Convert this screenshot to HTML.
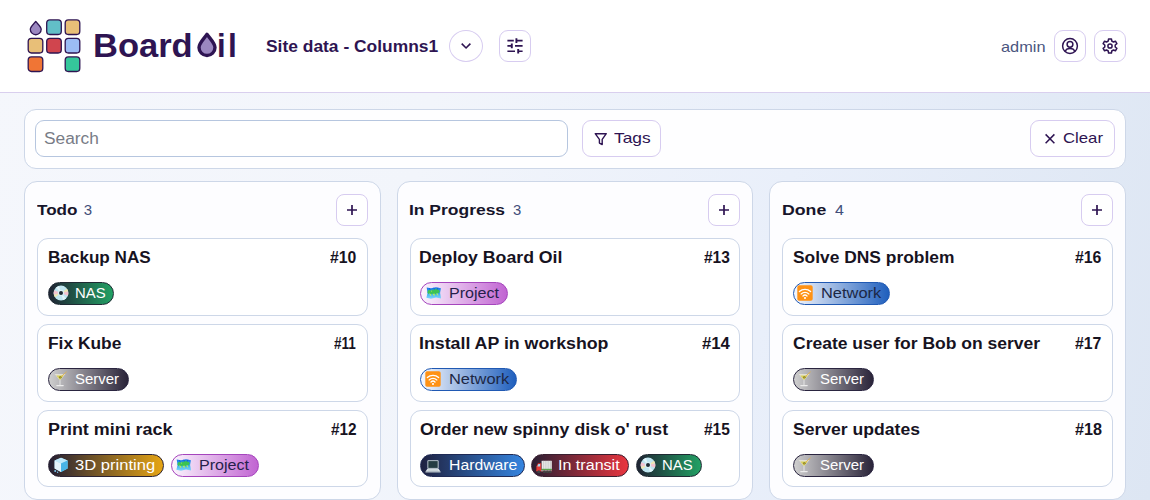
<!DOCTYPE html>
<html lang="en">
<head>
<meta charset="utf-8">
<title>Board Oil</title>
<style>
*{box-sizing:border-box;margin:0;padding:0}
html,body{width:1150px;height:500px;overflow:hidden}
body{font-family:"Liberation Sans",sans-serif;color:#1b1730;background:linear-gradient(102deg,#f5f7fc 0%,#f2f5fb 36%,#e9effa 66%,#dde6f3 100%);position:relative}
.sx{position:absolute;top:0;display:block;white-space:nowrap;transform-origin:0 50%}
.hdr{position:absolute;left:0;top:0;width:1150px;height:93px;background:#fff;border-bottom:1px solid #d9cfee}
.logo{position:absolute;left:26.200px;top:17.200px}
.brand{position:absolute;left:0;top:26px;width:300px;height:40px;font-size:32.400px;font-weight:700;color:#2e1452;line-height:40px;white-space:nowrap}
.brand .drop{position:absolute;left:194.700px;top:4.600px}
.site{position:absolute;left:0;top:36px;width:450px;height:22px;font-size:16px;font-weight:700;color:#2e1452;line-height:22px;white-space:nowrap}
.ib{position:absolute;top:30px;width:32px;height:32px;border:1px solid #d7ccf0;background:#fff;border-radius:9px}
.ib svg{position:absolute;left:0;top:0}
.ib.round{border-radius:50%}
.admin{position:absolute;left:0;top:36px;width:1050px;height:22px;font-size:15px;color:#4b5680;line-height:22px;white-space:nowrap}
.panel{position:absolute;left:24px;top:109px;width:1102px;height:60px;background:#fefeff;border:1px solid #cdd7e8;border-radius:12px}
.search{position:absolute;left:10px;top:10px;width:533px;height:37px;border:1px solid #b6c6df;border-radius:9px;background:#fff;font-size:16px;color:#787c86;line-height:35.500px}
.btn{position:absolute;top:10px;height:37px;border:1px solid #d7ccf0;border-radius:9px;background:#fff;font-size:15px;color:#2e1452;line-height:34.400px;white-space:nowrap}
.col{position:absolute;top:181px;width:356.670px;height:319px;background:#fdfdff;border:1px solid #cdd7e8;border-radius:13px}
.col h2{position:absolute;left:0;top:18px;width:300px;height:20px;font-size:15px;font-weight:700;line-height:19.800px;color:#17152b;white-space:nowrap}
.col h2 em{position:absolute;left:0;top:0;line-height:19.400px;font-style:normal;font-weight:400;color:#414e7a;font-size:15px}
.add{position:absolute;right:12px;top:12px;width:32px;height:32px;border:1px solid #d7ccf0;border-radius:8px;background:#fff}
.add svg{position:absolute;left:0;top:0}
.card{position:absolute;left:12px;right:12px;height:78px;background:#fff;border:1px solid #cdd7e8;border-radius:11px}
.card b{position:absolute;left:0;top:9px;width:300px;height:20px;font-size:16px;line-height:20px;font-weight:700;color:#17131f;white-space:nowrap}
.card i{position:absolute;left:0;top:9px;width:330px;height:20px;font-size:16px;line-height:20px;font-weight:700;font-style:normal;color:#17131f;white-space:nowrap}
.tags{position:absolute;left:10px;top:43px;height:23px;width:320px}
.tag{position:absolute;top:0;height:23px;border-radius:12px;border:1px solid #222;font-size:14px;line-height:21px;white-space:nowrap;color:#fff}
.tag svg{position:absolute;left:3.600px;top:1.700px;width:16px;height:16px}
.nas{background:linear-gradient(90deg,#1f2333 0%,#22a164 100%);border-color:#1f2a33}
.srv{background:linear-gradient(90deg,#cfcfcf 0%,#2a2439 100%);border-color:#2a2540}
.p3d{background:linear-gradient(90deg,#231e33 0%,#e6a514 100%);border-color:#2a2233}
.prj{background:linear-gradient(90deg,#fbf5fd 0%,#c164d2 100%);border-color:#a545bd;color:#251f4b}
.net{background:linear-gradient(90deg,#f6f8fd 0%,#1f5fbd 100%);border-color:#2059b3;color:#1c2745}
.hw{background:linear-gradient(90deg,#1f2140 0%,#3585e0 100%);border-color:#1f2a55}
.trn{background:linear-gradient(90deg,#2a1f33 0%,#e9353f 100%);border-color:#3a1f30}
</style>
</head>
<body>
<div class="hdr">
<svg class="logo" width="60" height="60" viewBox="0 0 60 60">
<g stroke="#2e1452" stroke-width="1.3">
<path d="M9.75 4.4 C11.8 7.2 15.2 9.900 15.2 12.300 A5.450 5.450 0 0 1 4.300 12.300 C4.300 9.900 7.700 7.200 9.750 4.400 Z" fill="#9b87c0" stroke-linejoin="round"/>
<rect x="20.7" y="2.9" width="14.6" height="14.6" rx="3.2" fill="#62bfc8"/>
<rect x="39.2" y="2.9" width="14.6" height="14.6" rx="3.2" fill="#e8bf78"/>
<rect x="2.2" y="21.4" width="14.6" height="14.6" rx="3.2" fill="#e8bf78"/>
<rect x="20.7" y="21.4" width="14.6" height="14.6" rx="3.2" fill="#d0454e"/>
<rect x="39.2" y="21.4" width="14.6" height="14.6" rx="3.2" fill="#9bbcf5"/>
<rect x="2.2" y="39.9" width="14.6" height="14.6" rx="3.2" fill="#f07535"/>
<rect x="39.2" y="39.9" width="14.6" height="14.6" rx="3.2" fill="#35c79b"/>
</g></svg>
<div class="brand"><span class="sx" style="left:92.57px;transform:scaleX(1.065)">Board</span><svg class="drop" width="24" height="28" viewBox="0 0 24 28"><path d="M12 3.3 C15.4 8 20 12.200 20 16.500 A8 8 0 0 1 4 16.500 C4 12.200 8.600 8 12 3.3 Z" fill="#9b87c0" stroke="#2e1452" stroke-width="3.4" stroke-linejoin="round"/></svg><span class="sx" style="left:217.28px;transform:scaleX(0.960)">i</span><span class="sx" style="left:227.64px;transform:scaleX(0.980)">l</span></div>
<div class="site"><span class="sx" style="left:266.30px;transform:scaleX(1.088)">Site data - Columns1</span></div>
<div class="ib round" style="left:449px;width:34px"><svg width="30" height="30" viewBox="0 0 30 30"><path d="M11.700 12.600 L16.050 16.950 L20.400 12.600" fill="none" stroke="#2e1452" stroke-width="1.6"/></svg></div>
<div class="ib" style="left:499px"><svg width="30" height="30" viewBox="0 0 30 30"><g stroke="#2e1452" stroke-width="1.6" fill="none"><path d="M7.400 9.650H13.800M16.400 9.650H22.600M7.400 14.850H11.800M15 14.850H22.600M7.400 20.200H15M18.200 20.200H22.600"/><path d="M16.400 7.200V12M11.800 12.600V17.200M18.200 17.900V22.500" stroke-width="1.9"/></g></svg></div>
<div class="admin"><span class="sx" style="left:1001.30px;transform:scaleX(1.089)">admin</span></div>
<div class="ib" style="left:1054px"><svg width="30" height="30" viewBox="0 0 30 30"><g stroke="#2e1452" stroke-width="1.5" fill="none"><circle cx="15" cy="15" r="7.400"/><circle cx="15" cy="13.300" r="2.900"/><path d="M10.400 20.300 C11.300 16.600 18.700 16.600 19.600 20.300"/></g></svg></div>
<div class="ib" style="left:1094px"><svg width="30" height="30" viewBox="0 0 30 30"><path d="M13.27 9.99 L13.55 7.90 L16.45 7.90 L16.73 9.99 L18.48 11.00 L20.43 10.20 L21.88 12.70 L20.20 13.99 L20.20 16.01 L21.88 17.30 L20.43 19.80 L18.48 19.00 L16.73 20.01 L16.45 22.10 L13.55 22.10 L13.27 20.01 L11.52 19.00 L9.57 19.80 L8.12 17.30 L9.80 16.01 L9.80 13.99 L8.12 12.70 L9.57 10.20 L11.52 11.00 Z" fill="none" stroke="#2e1452" stroke-width="1.5" stroke-linejoin="round"/><circle cx="15" cy="15" r="2.100" fill="none" stroke="#2e1452" stroke-width="1.5"/></svg></div>
</div>
<div class="panel">
<div class="search"><span class="sx" style="left:8.20px;transform:scaleX(1.082)">Search</span></div>
<div class="btn" style="left:557px;width:79px"><svg style="position:absolute;left:9.900px;top:10.200px" width="16" height="16" viewBox="0 0 16 16"><path d="M2.200 2.700H13.300L9.200 8.300V13.500L6.400 12.100V8.300Z" fill="none" stroke="#2e1452" stroke-width="1.4" stroke-linejoin="round"/></svg><span class="sx" style="left:30.60px;transform:scaleX(1.158)">Tags</span></div>
<div class="btn" style="left:1005px;width:85px"><svg style="position:absolute;left:11.200px;top:10.200px" width="16" height="16" viewBox="0 0 16 16"><path d="M3.600 3.400L12.400 12.200M12.400 3.400L3.600 12.200" fill="none" stroke="#2e1452" stroke-width="1.5"/></svg><span class="sx" style="left:31.80px;transform:scaleX(1.116)">Clear</span></div>
</div>
<div class="col" style="left:24px"><h2><span class="sx" style="left:12.30px;transform:scaleX(1.139)">Todo</span><em><span class="sx" style="left:58.70px;transform:scaleX(1.000)">3</span></em></h2><div class="add"><svg width="30" height="30" viewBox="0 0 30 30"><path d="M15 10V20M10 15H20" stroke="#2e1452" stroke-width="1.7" fill="none"/></svg></div><div class="card" style="top:56px;height:78px"><b><span class="sx" style="left:9.83px;transform:scaleX(1.069)">Backup NAS</span></b><i><span class="sx" style="left:291.80px;transform:scaleX(0.985)">#10</span></i><div class="tags" style="left:10.00px"><div class="tag nas" style="left:0.00px;width:66px"><svg viewBox="0 0 16 16"><circle cx="8" cy="8" r="7.4" fill="#bfe6f0"/><path d="M8 8 L1.2 5.2 A7.4 7.4 0 0 0 0.9 9.8 Z" fill="#f3c3cf"/><path d="M8 8 L14.8 10.8 A7.4 7.4 0 0 0 15.1 6.2 Z" fill="#f3c3cf"/><path d="M8 8 L0.9 9.8 A7.4 7.4 0 0 0 2 12.3 Z" fill="#f0e6b0"/><path d="M8 8 L15.1 6.2 A7.4 7.4 0 0 0 14 3.7 Z" fill="#f0e6b0"/><path d="M8 8 L3 2.6 A7.4 7.4 0 0 1 6 0.9 Z" fill="#e2f5fa"/><path d="M8 8 L13 13.4 A7.4 7.4 0 0 1 10 15.1 Z" fill="#e2f5fa"/><circle cx="8" cy="8" r="3.1" fill="#d9eef4"/><circle cx="8" cy="8" r="2" fill="#1f2a33"/></svg><span class="sx" style="left:25.54px;transform:scaleX(1.064)">NAS</span></div></div></div><div class="card" style="top:142px;height:78px"><b><span class="sx" style="left:9.81px;transform:scaleX(1.086)">Fix Kube</span></b><i><span class="sx" style="left:296.30px;transform:scaleX(0.845)">#11</span></i><div class="tags" style="left:10.00px"><div class="tag srv" style="left:0.00px;width:80.7px"><svg viewBox="0 0 16 16"><path d="M1.5 3 H12.5 L7 9.5 Z" fill="#e9e6d8" fill-opacity=".85"/><path d="M3.2 4.6 H10.8 L7 9 Z" fill="#d9cf5a"/><circle cx="7.4" cy="6.3" r="1.3" fill="#7d9a2c"/><circle cx="7.1" cy="6.5" r=".5" fill="#d8402c"/><path d="M7.4 6.3 L13.6 .8" stroke="#e0b24a" stroke-width=".9"/><path d="M7 9.2 V14.2" stroke="#e4e4e4" stroke-width="1"/><path d="M3.8 14.6 H10.2" stroke="#ececec" stroke-width="1.2" stroke-linecap="round"/></svg><span class="sx" style="left:26.20px;transform:scaleX(1.068)">Server</span></div></div></div><div class="card" style="top:228px;height:77px"><b><span class="sx" style="left:9.78px;transform:scaleX(1.120)">Print mini rack</span></b><i><span class="sx" style="left:293.30px;transform:scaleX(0.959)">#12</span></i><div class="tags" style="left:10.00px"><div class="tag p3d" style="left:0.00px;width:116.4px"><svg viewBox="0 0 16 16"><path d="M8 .8 L14.6 3.6 V11.4 L8 15 L1.6 11.4 V3.6 Z" fill="#8fd3f2"/><path d="M8 .8 L14.6 3.6 L8 6.6 L1.6 3.6 Z" fill="#bfe8fa"/><path d="M1.6 3.6 L8 6.6 V15 L1.6 11.4 Z" fill="#e4f3fb"/><path d="M8 6.6 L14.6 3.6 V11.4 L8 15 Z" fill="#49b4e6"/><circle cx="2.2" cy="14" r="1" fill="#7cc8ee"/><circle cx="4.6" cy="15.3" r=".7" fill="#7cc8ee"/></svg><span class="sx" style="left:26.00px;transform:scaleX(1.184)">3D printing</span></div><div class="tag prj" style="left:122.80px;width:88px"><svg viewBox="0 0 16 16"><defs><linearGradient id="mg" x1="0" y1="0" x2="0" y2="1"><stop offset="0" stop-color="#1877e6"/><stop offset=".45" stop-color="#2f9ff0"/><stop offset=".75" stop-color="#59c3f5"/><stop offset="1" stop-color="#86d6f8"/></linearGradient></defs><path d="M1.700 2.400 L6 3.300 L11 2.200 L15.900 3.200 L15.100 8 L16.100 13.500 L11 12.600 L6 13.800 L1.400 12.800 L2.500 8 Z" fill="url(#mg)"/><path d="M2.400 7.600 L3 5.400 L4.600 4.800 L5.400 6 L6.600 4.400 L8 5.600 L9 4 L10.600 4.600 L11.200 3.600 L12.600 4.800 L14 5 L14.800 6.800 L13.400 8.600 L12.200 7.800 L11.200 9.800 L9.800 8.600 L8.600 10.200 L7.200 8.400 L5.800 9.600 L4.800 8.200 L3.400 9 Z" fill="#3cc352"/><path d="M4.200 8.600 l1.600 .400 .800 2 -1.600-.600Z M7.600 9 l1.800-.400 .600 2.200 -1.400-.400Z M11.200 8.200 l1.600 .600 .600 2.200 -1.600-1.200Z M5.600 6 l1.200-.400 .400 1.200Z" fill="#b9f060"/><path d="M4.400 3.200 l.8 1.800 M8.800 2.800 l.6 1.600 M12.800 2.800 l-.500 1.800" stroke="#0f5fd0" stroke-width=".9" fill="none"/></svg><span class="sx" style="left:27.45px;transform:scaleX(1.148)">Project</span></div></div></div></div>
<div class="col" style="left:396.67px"><h2><span class="sx" style="left:11.67px;transform:scaleX(1.164)">In Progress</span><em><span class="sx" style="left:115.63px;transform:scaleX(0.988)">3</span></em></h2><div class="add"><svg width="30" height="30" viewBox="0 0 30 30"><path d="M15 10V20M10 15H20" stroke="#2e1452" stroke-width="1.7" fill="none"/></svg></div><div class="card" style="top:56px;height:78px"><b><span class="sx" style="left:8.63px;transform:scaleX(1.105)">Deploy Board Oil</span></b><i><span class="sx" style="left:293.63px;transform:scaleX(0.967)">#13</span></i><div class="tags" style="left:9.43px"><div class="tag prj" style="left:0.00px;width:88px"><svg viewBox="0 0 16 16"><defs><linearGradient id="mg" x1="0" y1="0" x2="0" y2="1"><stop offset="0" stop-color="#1877e6"/><stop offset=".45" stop-color="#2f9ff0"/><stop offset=".75" stop-color="#59c3f5"/><stop offset="1" stop-color="#86d6f8"/></linearGradient></defs><path d="M1.700 2.400 L6 3.300 L11 2.200 L15.900 3.200 L15.100 8 L16.100 13.500 L11 12.600 L6 13.800 L1.400 12.800 L2.500 8 Z" fill="url(#mg)"/><path d="M2.400 7.600 L3 5.400 L4.600 4.800 L5.400 6 L6.600 4.400 L8 5.600 L9 4 L10.600 4.600 L11.200 3.600 L12.600 4.800 L14 5 L14.800 6.800 L13.400 8.600 L12.200 7.800 L11.200 9.800 L9.800 8.600 L8.600 10.200 L7.200 8.400 L5.800 9.600 L4.800 8.200 L3.400 9 Z" fill="#3cc352"/><path d="M4.200 8.600 l1.600 .400 .800 2 -1.600-.600Z M7.600 9 l1.800-.400 .600 2.200 -1.400-.400Z M11.200 8.200 l1.600 .600 .600 2.200 -1.600-1.200Z M5.600 6 l1.200-.400 .400 1.200Z" fill="#b9f060"/><path d="M4.400 3.200 l.8 1.800 M8.800 2.800 l.6 1.600 M12.800 2.800 l-.500 1.800" stroke="#0f5fd0" stroke-width=".9" fill="none"/></svg><span class="sx" style="left:27.45px;transform:scaleX(1.148)">Project</span></div></div></div><div class="card" style="top:142px;height:78px"><b><span class="sx" style="left:8.62px;transform:scaleX(1.110)">Install AP in workshop</span></b><i><span class="sx" style="left:291.53px;transform:scaleX(1.045)">#14</span></i><div class="tags" style="left:9.43px"><div class="tag net" style="left:0.00px;width:96.8px"><svg viewBox="0 0 16 16"><rect x=".3" y=".3" width="15.4" height="15.4" rx="1.8" fill="#ff9214"/><g fill="none" stroke="#fff" stroke-width="1.35" stroke-linecap="round"><path d="M2.4 6.6 A8 8 0 0 1 13.6 6.6"/><path d="M4.2 8.9 A5.4 5.4 0 0 1 11.8 8.9"/><path d="M6 11 A2.9 2.9 0 0 1 10 11"/></g><circle cx="8" cy="13" r="1.05" fill="#fff"/></svg><span class="sx" style="left:27.53px;transform:scaleX(1.172)">Network</span></div></div></div><div class="card" style="top:228px;height:77px"><b><span class="sx" style="left:9.73px;transform:scaleX(1.106)">Order new spinny disk o' rust</span></b><i><span class="sx" style="left:293.63px;transform:scaleX(0.967)">#15</span></i><div class="tags" style="left:9.43px"><div class="tag hw" style="left:0.00px;width:104.9px"><svg viewBox="0 0 16 16"><g transform="translate(0 1.2)"><rect x="2.4" y="2" width="11.2" height="8.6" rx=".8" fill="#c9d3d8"/><rect x="3.3" y="2.9" width="9.4" height="6.8" fill="#243b42"/><path d="M2.4 10.6 H13.6 L15.6 13.6 H.4 Z" fill="#dfe7ea"/><path d="M.4 13.6 H15.6 V14.3 H.4 Z" fill="#b9c4c9"/><path d="M3.4 11.2 H12.6 L13.4 12.6 H2.6 Z" fill="#c3ced3"/></g></svg><span class="sx" style="left:27.57px;transform:scaleX(1.127)">Hardware</span></div><div class="tag trn" style="left:111.30px;width:97.8px"><svg viewBox="0 0 16 16"><g transform="translate(0 1.6)"><rect x="5.6" y="2.2" width="10.2" height="8.8" fill="#eeeeee"/><path d="M7.4 2.2V11M9.2 2.2V11M11 2.2V11M12.8 2.2V11M14.6 2.2V11" stroke="#bdbdbd" stroke-width=".7"/><rect x="5.6" y="10.2" width="10.2" height="1.3" fill="#4caf50"/><path d="M2 4.6 H5.2 V11.5 H.4 V8 Z" fill="#e53935"/><path d="M2.4 5.4 H4.2 V8 H1.3 Z" fill="#a8d8f0"/><rect x=".2" y="11.3" width="15.6" height="1.4" fill="#e53935"/><rect x="5" y="11.5" width="10.8" height="1.2" fill="#9e9e9e"/><circle cx="2.8" cy="13.2" r="1.5" fill="#424242"/><circle cx="8.4" cy="13.2" r="1.4" fill="#424242"/><circle cx="11.4" cy="13.2" r="1.4" fill="#424242"/><circle cx="14.3" cy="13.2" r="1.4" fill="#424242"/></g></svg><span class="sx" style="left:25.15px;transform:scaleX(1.148)">In transit</span></div><div class="tag nas" style="left:215.50px;width:66px"><svg viewBox="0 0 16 16"><circle cx="8" cy="8" r="7.4" fill="#bfe6f0"/><path d="M8 8 L1.2 5.2 A7.4 7.4 0 0 0 0.9 9.8 Z" fill="#f3c3cf"/><path d="M8 8 L14.8 10.8 A7.4 7.4 0 0 0 15.1 6.2 Z" fill="#f3c3cf"/><path d="M8 8 L0.9 9.8 A7.4 7.4 0 0 0 2 12.3 Z" fill="#f0e6b0"/><path d="M8 8 L15.1 6.2 A7.4 7.4 0 0 0 14 3.7 Z" fill="#f0e6b0"/><path d="M8 8 L3 2.6 A7.4 7.4 0 0 1 6 0.9 Z" fill="#e2f5fa"/><path d="M8 8 L13 13.4 A7.4 7.4 0 0 1 10 15.1 Z" fill="#e2f5fa"/><circle cx="8" cy="8" r="3.1" fill="#d9eef4"/><circle cx="8" cy="8" r="2" fill="#1f2a33"/></svg><span class="sx" style="left:25.54px;transform:scaleX(1.064)">NAS</span></div></div></div></div>
<div class="col" style="left:769.33px"><h2><span class="sx" style="left:11.19px;transform:scaleX(1.181)">Done</span><em><span class="sx" style="left:64.27px;transform:scaleX(1.062)">4</span></em></h2><div class="add"><svg width="30" height="30" viewBox="0 0 30 30"><path d="M15 10V20M10 15H20" stroke="#2e1452" stroke-width="1.7" fill="none"/></svg></div><div class="card" style="top:56px;height:78px"><b><span class="sx" style="left:9.67px;transform:scaleX(1.087)">Solve DNS problem</span></b><i><span class="sx" style="left:291.87px;transform:scaleX(0.989)">#16</span></i><div class="tags" style="left:9.57px"><div class="tag net" style="left:0.00px;width:96.8px"><svg viewBox="0 0 16 16"><rect x=".3" y=".3" width="15.4" height="15.4" rx="1.8" fill="#ff9214"/><g fill="none" stroke="#fff" stroke-width="1.35" stroke-linecap="round"><path d="M2.4 6.6 A8 8 0 0 1 13.6 6.6"/><path d="M4.2 8.9 A5.4 5.4 0 0 1 11.8 8.9"/><path d="M6 11 A2.9 2.9 0 0 1 10 11"/></g><circle cx="8" cy="13" r="1.05" fill="#fff"/></svg><span class="sx" style="left:27.53px;transform:scaleX(1.172)">Network</span></div></div></div><div class="card" style="top:142px;height:78px"><b><span class="sx" style="left:9.67px;transform:scaleX(1.094)">Create user for Bob on server</span></b><i><span class="sx" style="left:291.87px;transform:scaleX(0.989)">#17</span></i><div class="tags" style="left:9.57px"><div class="tag srv" style="left:0.00px;width:80.7px"><svg viewBox="0 0 16 16"><path d="M1.5 3 H12.5 L7 9.5 Z" fill="#e9e6d8" fill-opacity=".85"/><path d="M3.2 4.6 H10.8 L7 9 Z" fill="#d9cf5a"/><circle cx="7.4" cy="6.3" r="1.3" fill="#7d9a2c"/><circle cx="7.1" cy="6.5" r=".5" fill="#d8402c"/><path d="M7.4 6.3 L13.6 .8" stroke="#e0b24a" stroke-width=".9"/><path d="M7 9.2 V14.2" stroke="#e4e4e4" stroke-width="1"/><path d="M3.8 14.6 H10.2" stroke="#ececec" stroke-width="1.2" stroke-linecap="round"/></svg><span class="sx" style="left:26.20px;transform:scaleX(1.068)">Server</span></div></div></div><div class="card" style="top:228px;height:77px"><b><span class="sx" style="left:9.67px;transform:scaleX(1.098)">Server updates</span></b><i><span class="sx" style="left:291.87px;transform:scaleX(1.011)">#18</span></i><div class="tags" style="left:9.57px"><div class="tag srv" style="left:0.00px;width:80.7px"><svg viewBox="0 0 16 16"><path d="M1.5 3 H12.5 L7 9.5 Z" fill="#e9e6d8" fill-opacity=".85"/><path d="M3.2 4.6 H10.8 L7 9 Z" fill="#d9cf5a"/><circle cx="7.4" cy="6.3" r="1.3" fill="#7d9a2c"/><circle cx="7.1" cy="6.5" r=".5" fill="#d8402c"/><path d="M7.4 6.3 L13.6 .8" stroke="#e0b24a" stroke-width=".9"/><path d="M7 9.2 V14.2" stroke="#e4e4e4" stroke-width="1"/><path d="M3.8 14.6 H10.2" stroke="#ececec" stroke-width="1.2" stroke-linecap="round"/></svg><span class="sx" style="left:26.20px;transform:scaleX(1.068)">Server</span></div></div></div></div>
</body>
</html>
